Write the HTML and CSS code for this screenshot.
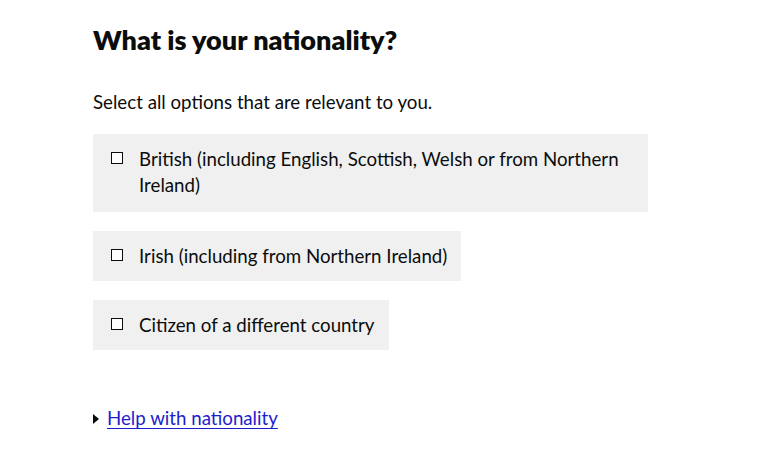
FILE: index.html
```html
<!DOCTYPE html>
<html lang="en">
<head>
<meta charset="utf-8">
<title>What is your nationality?</title>
<link rel="stylesheet" href="styles.css">
</head>
<body>
<main class="page">
  <fieldset class="fieldset">
    <legend class="heading">What is your nationality?</legend>
    <p class="hint">Select all options that are relevant to you.</p>
    <div class="options">
      <label class="option">
        <input type="checkbox" class="box">
        <span class="label-text">British (including English, Scottish, Welsh or from Northern Ireland)</span>
      </label>
      <label class="option">
        <input type="checkbox" class="box">
        <span class="label-text">Irish (including from Northern Ireland)</span>
      </label>
      <label class="option">
        <input type="checkbox" class="box">
        <span class="label-text">Citizen of a different country</span>
      </label>
    </div>
  </fieldset>
  <details class="details">
    <summary class="summary"><span class="summary-text">Help with nationality</span></summary>
  </details>
</main>
</body>
</html>
```

FILE: styles.css
```css
html, body {
  margin: 0;
  padding: 0;
  background: #ffffff;
}
body {
  font-family: Lato, "Liberation Sans", Arial, sans-serif;
  color: #0b0c0c;
}
.page {
  padding: 24px 0 0 93px;
  width: 555px;
}
.fieldset {
  border: 0;
  margin: 0;
  padding: 0;
  min-width: 0;
}
.heading {
  padding: 0;
  font-size: 27px;
  font-weight: 800;
  line-height: 32px;
  margin: 0;
}
.hint {
  margin: 34px 0 0;
  font-size: 18.7px;
  line-height: 25px;
}
.options {
  margin-top: 19px;
  display: flex;
  flex-direction: column;
  align-items: flex-start;
  gap: 19px;
}
.option {
  display: flex;
  align-items: flex-start;
  gap: 16px;
  max-width: 555px;
  box-sizing: border-box;
  padding: 12px 14px 12px 18px;
  background: #f0f0f0;
  font-size: 18.7px;
  line-height: 26px;
}
.option:first-child {
  padding-bottom: 14px;
}
.box {
  appearance: none;
  -webkit-appearance: none;
  margin: 6px 0 0;
  width: 12px;
  height: 12px;
  flex: none;
  border: 1px solid #0b0c0c;
  background: #ffffff;
  box-sizing: border-box;
}
.details {
  margin-top: 56px;
  font-size: 18.7px;
  line-height: 25px;
}
.summary {
  color: #1d1dcf;
  cursor: pointer;
  list-style: none;
  display: flex;
  align-items: center;
  gap: 8px;
}
.summary::-webkit-details-marker { display: none; }
.summary::before {
  content: "";
  width: 0;
  height: 0;
  border-top: 5px solid transparent;
  border-bottom: 5px solid transparent;
  border-left: 6px solid #0b0c0c;
}
.summary-text {
  text-decoration: underline;
  text-underline-offset: 3px;
}
```
